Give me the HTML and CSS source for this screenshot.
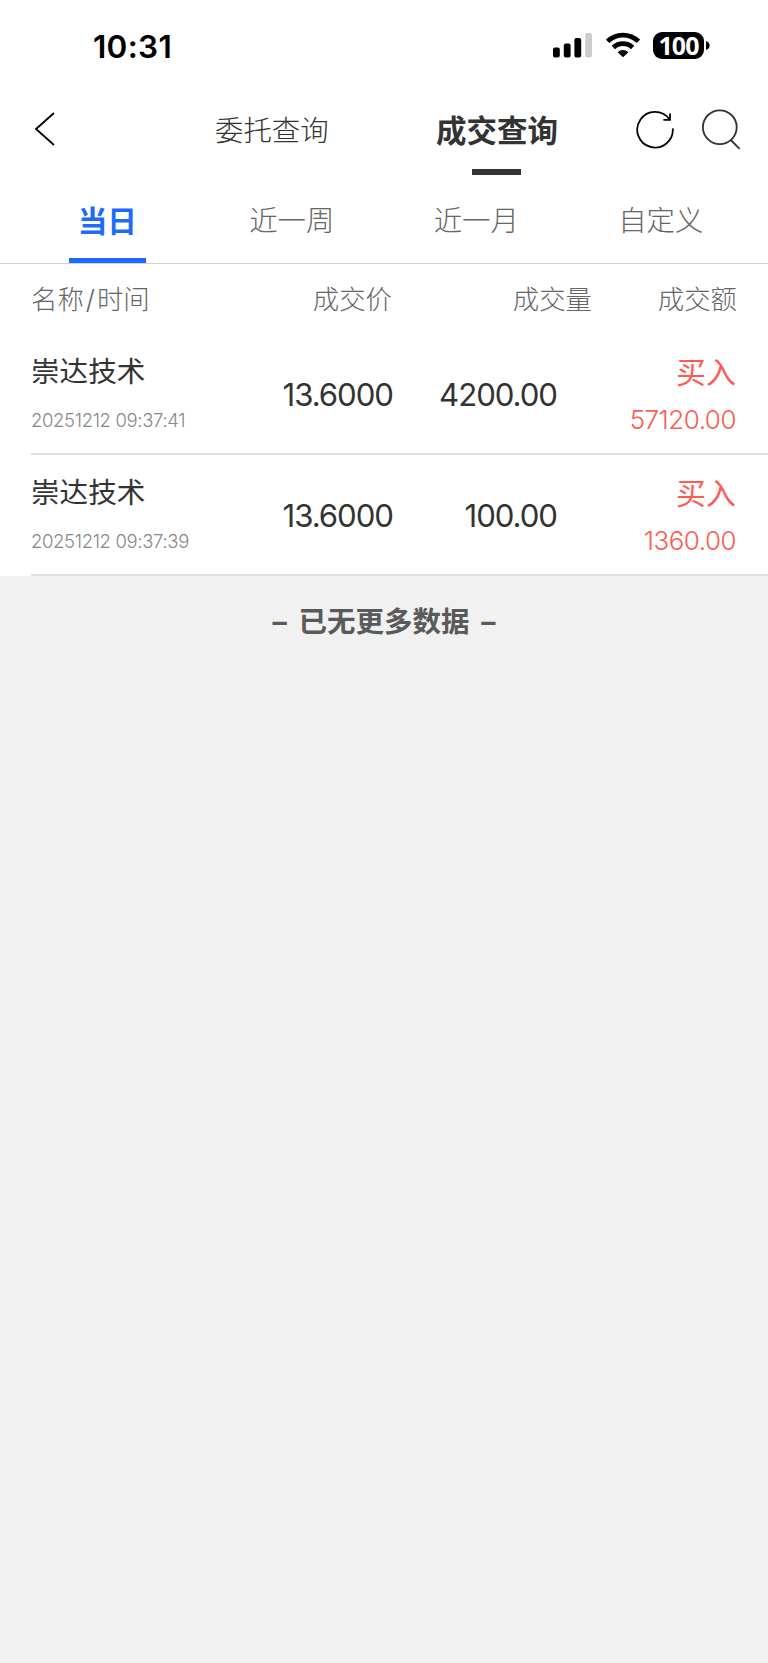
FILE: index.html
```html
<!DOCTYPE html>
<html lang="zh-CN">

<head>
    <meta charset="UTF-8">
    <meta name="viewport" content="width=device-width, initial-scale=1.0">
    <title>成交查询</title>
    <link rel="stylesheet" href="styles.css">
</head>

<body>
    <div class="status-bar">
        <span class="time">10:31</span>
        <svg class="signal" width="40" height="26" viewBox="0 0 40 26">
            <rect x="0" y="15.5" width="6.8" height="10" rx="2" />
            <rect x="10.8" y="11.5" width="6.8" height="14" rx="2" />
            <rect x="21.4" y="6" width="6.8" height="19.5" rx="2" />
            <rect class="off" x="32.2" y="1" width="6.8" height="24.5" rx="2" />
        </svg>
        <svg class="wifi" width="34" height="26" viewBox="0 0 34 26">
            <path d="M1.6 9.4 A22 22 0 0 1 32.4 9.4" />
            <path d="M7.4 15.4 A14 14 0 0 1 26.6 15.4" />
            <path class="dot" d="M17 25.2 L11.6 20.2 A7.5 7.5 0 0 1 22.4 20.2 Z" />
        </svg>
        <span class="battery">100</span>
        <svg class="battery-tip" width="4" height="9" viewBox="0 0 4 9">
            <path d="M0 0 Q3.6 1.2 3.6 4.5 Q3.6 7.8 0 9 Z" />
        </svg>
    </div>

    <div class="nav">
        <svg class="back" width="22" height="34" viewBox="0 0 22 34">
            <path d="M20 1 L2 17 L20 33" />
        </svg>
        <span class="nav-item">委托查询</span>
        <span class="nav-item active">成交查询</span>
        <svg class="refresh" width="40" height="40" viewBox="0 0 40 40">
            <path d="M37.8 19.4 A17.8 17.8 0 1 1 34.4 10.2" />
            <path d="M35 4.4 L35 10.8 L28.4 10.8" />
        </svg>
        <svg class="search" width="40" height="42" viewBox="0 0 40 42">
            <circle cx="18.8" cy="19.2" r="16.9" />
            <path d="M29.8 32 L38.6 40.8" />
        </svg>
    </div>

    <div class="tabs">
        <span class="tab active">当日</span>
        <span class="tab">近一周</span>
        <span class="tab">近一月</span>
        <span class="tab">自定义</span>
    </div>

    <div class="list">
        <div class="list-header">
            <span>名称<span class="slash">/</span>时间</span>
            <span>成交价</span>
            <span>成交量</span>
            <span>成交额</span>
        </div>
        <div class="row">
            <div class="stock">
                <div class="name">崇达技术</div>
                <div class="date">20251212 09:37:41</div>
            </div>
            <div class="number">13.6000</div>
            <div class="number">4200.00</div>
            <div class="amount">
                <div class="side">买入</div>
                <div class="total">57120.00</div>
            </div>
        </div>
        <div class="row">
            <div class="stock">
                <div class="name">崇达技术</div>
                <div class="date">20251212 09:37:39</div>
            </div>
            <div class="number">13.6000</div>
            <div class="number">100.00</div>
            <div class="amount">
                <div class="side">买入</div>
                <div class="total">1360.00</div>
            </div>
        </div>
    </div>

    <p class="no-more">– 已无更多数据 –</p>
</body>

</html>
```

FILE: styles.css
```css
* {
    box-sizing: border-box;
}

body {
    margin: 0;
    min-height: 1663px;
    background-color: #f1f1f1;
    color: #333;
    font-family: Inter, "Noto Sans CJK SC", sans-serif;
}

svg {
    display: block;
    flex: none;
}

/* status bar */
.status-bar {
    display: flex;
    align-items: center;
    height: 90px;
    padding-left: 93px;
    background-color: #fff;
    color: #000;
}

.time {
    width: 460px;
    padding-top: 3px;
    font-size: 31.5px;
    font-weight: 600;
    letter-spacing: 0.3px;
    line-height: 40px;
}

.signal .off {
    fill: #ccc;
}

.wifi {
    margin-left: 13px;
    fill: none;
    stroke: #000;
    stroke-width: 4.8;
}

.wifi .dot {
    fill: #000;
    stroke: none;
}

.battery {
    width: 51px;
    height: 27px;
    margin-left: 13px;
    border-radius: 9px;
    background-color: #000;
    color: #fff;
    font-family: "Noto Sans", sans-serif;
    font-size: 25px;
    font-weight: 700;
    letter-spacing: -0.9px;
    line-height: 26px;
    text-align: center;
}

.battery-tip {
    margin-left: 2px;
}

/* top navigation */
.nav {
    display: flex;
    align-items: center;
    height: 84px;
    padding-bottom: 5px;
    padding-left: 34px;
    background-color: #fff;
}

.nav svg {
    margin-bottom: 2px;
    fill: none;
    stroke: #000;
    stroke-width: 1.8;
}

.nav-item {
    width: 114px;
    margin-left: 159px;
    padding-top: 3px;
    font-size: 28.4px;
    font-weight: 300;
    line-height: 40px;
    white-space: nowrap;
}

.nav-item.active {
    position: relative;
    width: 122px;
    margin-left: 107px;
    padding-top: 2px;
    font-size: 30.5px;
    font-weight: 700;
}

.nav-item.active::after {
    content: "";
    position: absolute;
    left: 36px;
    bottom: -24px;
    width: 49px;
    height: 6px;
    background-color: #333;
}

.nav .refresh {
    margin-left: 77px;
}

.nav .search {
    margin-left: 26px;
    stroke: #333;
}

/* period tabs */
.tabs {
    display: flex;
    height: 90px;
    padding: 0 15px;
    border-bottom: 1px solid #d2d2d2;
    background-color: #fff;
}

.tab {
    flex: 1;
    display: flex;
    flex-direction: column;
    align-items: center;
    padding-top: 27px;
    color: #666;
    font-size: 28.4px;
    font-weight: 300;
    line-height: 40px;
}

.tab.active {
    color: #1f69ff;
    font-size: 29.6px;
    font-weight: 700;
}

.tab.active::after {
    content: "";
    width: 77px;
    height: 5px;
    margin-top: auto;
    background-color: #1f69ff;
}

/* deals */
.list {
    background-color: #fff;
}

.list-header {
    display: grid;
    grid-template-columns: 160px 201px 200px 145px;
    height: 70px;
    padding-left: 31px;
    color: #666;
    font-size: 26.4px;
    font-weight: 300;
    line-height: 70px;
    text-align: right;
}

.list-header span:first-child {
    text-align: left;
    white-space: nowrap;
}

.slash {
    margin: 0 2px;
}

.row {
    display: grid;
    grid-template-columns: 180px 182px 164px 179px;
    height: 121px;
    margin-left: 31px;
    border-bottom: 2px solid #e0e0e0;
}

.name {
    padding-top: 18px;
    font-size: 28.6px;
    line-height: 40px;
}

.date {
    margin-top: 15px;
    color: #888;
    font-size: 18.5px;
    font-weight: 300;
    letter-spacing: -0.35px;
    line-height: 26px;
    white-space: nowrap;
}

.number {
    padding-top: 1px;
    font-size: 31.2px;
    letter-spacing: -1.05px;
    line-height: 120px;
    text-align: right;
}

.amount {
    color: #ff5a52;
    text-align: right;
}

.side {
    padding-top: 18px;
    font-size: 30px;
    line-height: 40px;
}

.total {
    margin-top: 10px;
    font-size: 26px;
    font-weight: 300;
    letter-spacing: -0.5px;
    line-height: 36px;
}

.no-more {
    margin: 26px 0 0;
    color: #5a5a5a;
    font-size: 28.5px;
    font-weight: 700;
    line-height: 40px;
    text-align: center;
    word-spacing: 5px;
}
```
